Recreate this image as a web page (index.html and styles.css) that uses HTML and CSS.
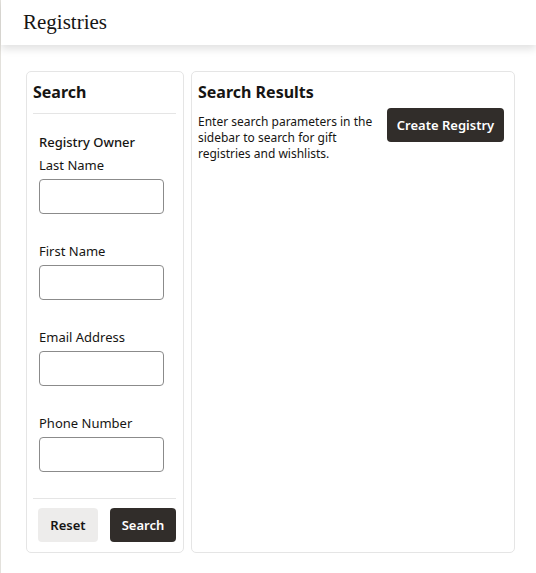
FILE: index.html
```html
<!DOCTYPE html>
<html>
<head>
<meta charset="utf-8">
<link rel="stylesheet" href="styles.css">
</head>
<body>
<div class="page">
  <header class="topbar"><h1 class="title">Registries</h1></header>
  <main class="content">
    <aside class="panel sidebar">
      <h2 class="panel-title">Search</h2>
      <div class="form">
        <div class="group-title">Registry Owner</div>
        <label class="field"><span class="label">Last Name</span><input class="input" type="text"></label>
        <label class="field"><span class="label">First Name</span><input class="input" type="text"></label>
        <label class="field"><span class="label">Email Address</span><input class="input" type="text"></label>
        <label class="field"><span class="label">Phone Number</span><input class="input" type="text"></label>
      </div>
      <div class="actions">
        <button class="btn btn-light">Reset</button>
        <button class="btn btn-dark">Search</button>
      </div>
    </aside>
    <section class="panel results">
      <h2 class="panel-title">Search Results</h2>
      <div class="results-row">
        <p class="hint">Enter search parameters in the sidebar to search for gift registries and wishlists.</p>
        <button class="btn btn-dark btn-create">Create Registry</button>
      </div>
    </section>
  </main>
</div>
</body>
</html>
```
FILE: styles.css
```css
* { box-sizing: border-box; }
html, body { margin: 0; padding: 0; background: #fff; }
body { font-family: "Noto Sans", "Open Sans", sans-serif; color: #161513; }
.page { min-height: 573px; border-left: 1px solid #e3e1dc; }
.topbar {
  height: 45px;
  background: #fff;
  box-shadow: 0 4px 8px rgba(0,0,0,0.12);
  padding: 0 0 0 22px;
  display: flex;
  align-items: center;
}
.title {
  margin: 0;
  font-family: "Liberation Serif", serif;
  font-weight: normal;
  font-size: 21px;
  color: #161513;
}
.content {
  display: flex;
  gap: 7px;
  padding: 26px 21px 0 25px;
}
.panel {
  border: 1px solid #e5e5e5;
  border-radius: 5px;
  height: 482px;
  background: #fff;
}
.sidebar {
  width: 158px;
  padding: 0 7px 0 6px;
  display: flex;
  flex-direction: column;
}
.results { flex: 1; padding: 0 10px 0 6px; }
.panel-title {
  margin: 0;
  font-size: 16px;
  font-weight: 700;
  line-height: 22px;
  padding-top: 9px;
  height: 42px;
}
.sidebar .panel-title { border-bottom: 1px solid #e5e5e5; }
.form { padding: 19px 0 0 6px; flex: 1; }
.group-title { font-size: 13px; font-weight: 500; line-height: 18px; margin-bottom: 5px; }
.field { display: flex; flex-direction: column; margin-bottom: 28px; }
.field:last-child { margin-bottom: 0; }
.label { font-size: 13px; font-weight: 400; line-height: 18px; margin-bottom: 5px; }
.input {
  width: 125px;
  height: 35px;
  border: 1px solid #8b8b8b;
  border-radius: 4px;
  background: #fff;
  font: inherit;
  padding: 0 6px;
}
.actions {
  border-top: 1px solid #e5e5e5;
  display: flex;
  justify-content: space-between;
  padding: 9px 0 9px 5px;
  height: 54px;
}
.btn {
  font-family: "Noto Sans", "Open Sans", sans-serif;
  font-size: 13px;
  font-weight: 600;
  height: 34px;
  border: 0;
  border-radius: 4px;
  padding: 0 14px;
  cursor: pointer;
}
.btn-light { background: #edeceb; color: #161513; width: 60px; padding: 0; }
.btn-dark { background: #312d2a; color: #fff; width: 66px; padding: 0; }
.results-row { display: flex; justify-content: space-between; align-items: flex-start; }
.hint {
  margin: 0;
  font-size: 12px;
  line-height: 16px;
  width: 180px;
  color: #161513;
}
.btn-create { width: 117px; margin-top: -6px; }
```
